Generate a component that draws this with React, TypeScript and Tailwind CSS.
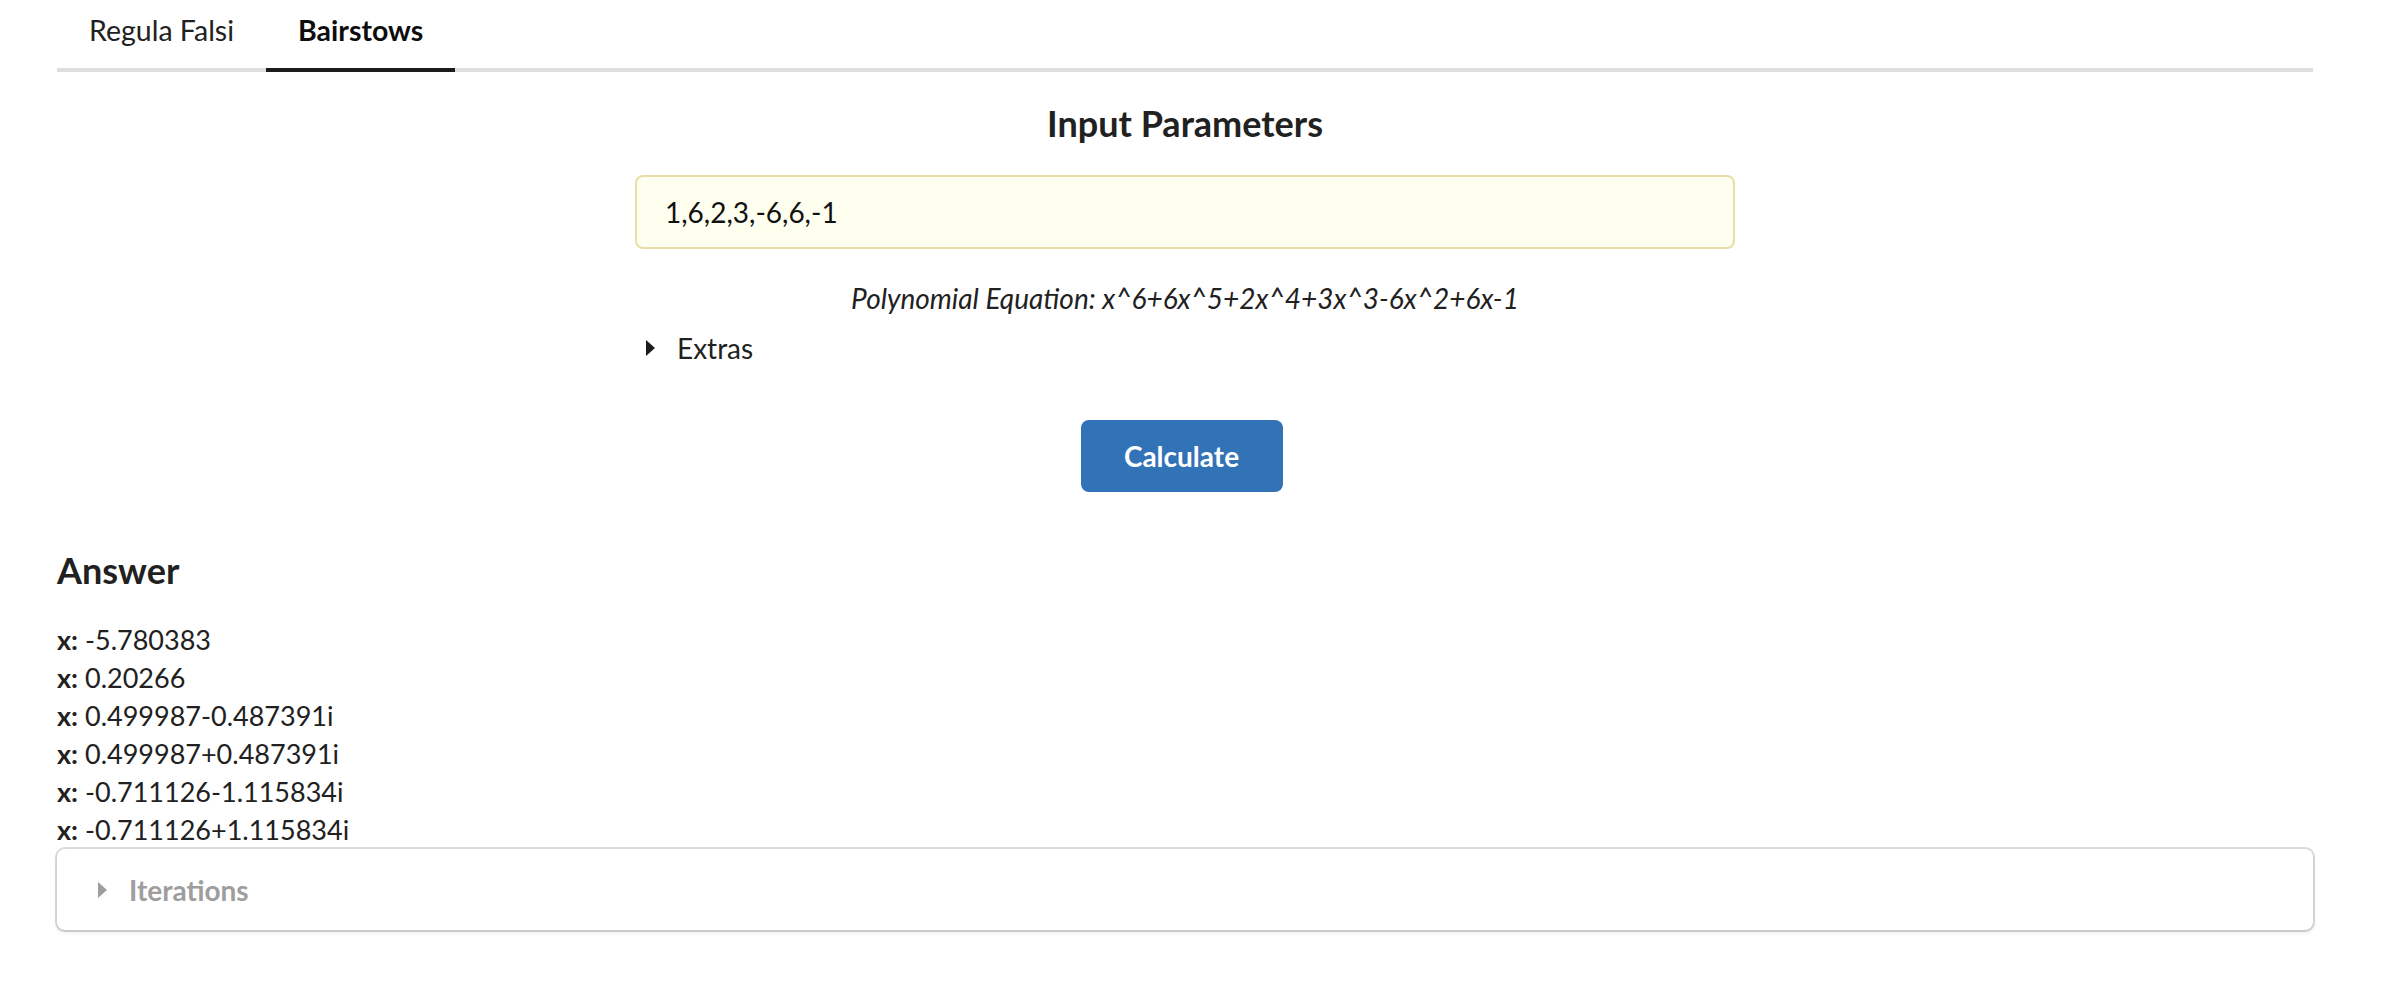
const roots = [
  "-5.780383",
  "0.20266",
  "0.499987-0.487391i",
  "0.499987+0.487391i",
  "-0.711126-1.115834i",
  "-0.711126+1.115834i",
];

function Caret({ className }: { className: string }) {
  return (
    <svg width="9" height="16" viewBox="0 0 9 16" className={className}>
      <path d="M0 0 L9 8 L0 16 Z" fill="currentColor" />
    </svg>
  );
}

function Tab({ label, active }: { label: string; active?: boolean }) {
  return (
    <div
      className={
        active
          ? "px-8 py-6 leading-[28px] -mb-1 border-b-4 border-[#1b1c1d] font-bold text-[#0d0d0d]"
          : "px-8 py-6 leading-[28px] -mb-1 border-b-4 border-transparent text-[#212121]"
      }
    >
      {label}
    </div>
  );
}

export default function App() {
  return (
    <div className="w-[2396px] h-[982px] overflow-hidden bg-white font-['Lato','Open_Sans',sans-serif] text-[28px] text-[#212121]">
      <div className="ml-[57px] w-[2256px]">
        {/* Tabs */}
        <div className="flex -mt-2 border-b-4 border-[#dedede] text-[28.5px]">
          <Tab label="Regula Falsi" />
          <Tab label="Bairstows" active />
        </div>

        {/* Input form */}
        <div className="flex flex-col items-center">
          <h3 className="mt-7 text-[36px] leading-[46px] font-bold">Input Parameters</h3>
          <div className="w-[1100px] mt-[29px] flex flex-col">
            <div className="h-[74px] flex items-center px-[28px] rounded-[8px] border-2 border-[#e6e0a7] bg-[#fffff0] text-[#111]">
              1,6,2,3,-6,6,-1
            </div>
            <p className="mt-[29px] leading-[40px] italic text-center">
              Polynomial Equation: x^6+6x^5+2x^4+3x^3-6x^2+6x-1
            </p>
            <div className="mt-[10px] flex items-center leading-[40px]">
              <span className="w-[35px] mr-[7px] flex justify-center pr-1">
                <Caret className="text-[#1b1c1d]" />
              </span>
              Extras
            </div>
          </div>
          <button className="mt-[52px] mr-[7px] h-[72px] w-[202px] rounded-[8px] bg-[#3272b7] text-white font-bold leading-[28px]">
            Calculate
          </button>
        </div>

        {/* Answer */}
        <h3 className="mt-[55px] text-[36px] leading-[46px] font-bold">Answer</h3>
        <div className="mt-[28px] text-[27px] leading-[38px]">
          {roots.map((r, i) => (
            <div key={i}>
              <b>x:</b> {r}
            </div>
          ))}
        </div>

        {/* Iterations accordion */}
        <div className="h-[81px] flex items-center px-[30px] rounded-[8px] shadow-[0_2px_4px_0_rgba(34,36,38,0.15),0_0_0_2px_rgba(34,36,38,0.15)]">
          <span className="w-[35px] mr-[7px] flex justify-center pr-1">
            <Caret className="text-[#9e9e9e]" />
          </span>
          <span className="font-bold text-[#9e9e9e]">Iterations</span>
        </div>
      </div>
    </div>
  );
}
